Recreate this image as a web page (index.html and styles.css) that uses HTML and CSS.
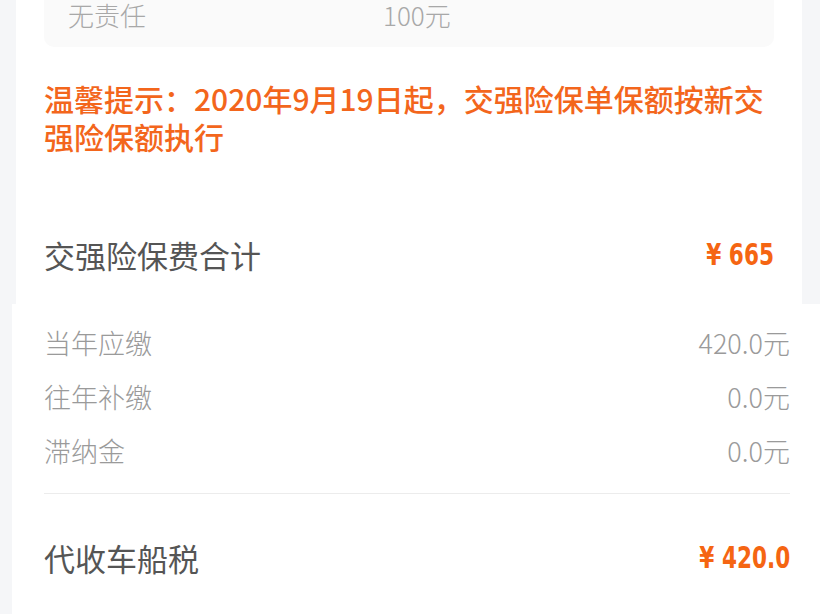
FILE: index.html
```html
<!DOCTYPE html>
<html lang="zh-CN">
<head>
    <meta charset="UTF-8">
    <meta name="viewport" content="width=device-width, initial-scale=1.0">
    <title>交强险保费明细</title>
    <link rel="stylesheet" href="styles.css">
</head>
<body>

    <div class="card card-top">
        <div class="limits">
            <div class="limit-row">
                <span class="limit-name">无责任</span>
                <span class="limit-value">100元</span>
            </div>
        </div>

        <p class="notice">温馨提示：2020年9月19日起，交强险保单保额按新交强险保额执行</p>

        <div class="total-row">
            <span class="total-label">交强险保费合计</span>
            <span class="amount">¥ 665</span>
        </div>
    </div>

    <div class="card card-tax">
        <div class="fee-row">
            <span>当年应缴</span>
            <span>420.0元</span>
        </div>
        <div class="fee-row">
            <span>往年补缴</span>
            <span>0.0元</span>
        </div>
        <div class="fee-row">
            <span>滞纳金</span>
            <span>0.0元</span>
        </div>

        <div class="divider"></div>

        <div class="total-row tax-total">
            <span class="total-label">代收车船税</span>
            <span class="amount">¥ 420.0</span>
        </div>
    </div>

</body>
</html>
```

FILE: styles.css
```css
html, body {
    margin: 0;
    padding: 0;
}
body {
    background-color: #f5f6f8;
    font-family: "Noto Sans CJK SC", "Noto Sans", sans-serif;
    width: 820px;
    overflow: hidden;
}
.card {
    background-color: #fff;
}
.card-top {
    margin-left: 16px;
    width: 786px;
    padding: 0 28px;
    box-sizing: border-box;
}
.limits {
    background-color: #fafafa;
    border-radius: 0 0 10px 10px;
    padding: 0 24px 17px;
}
.limit-row {
    display: flex;
    height: 30px;
    line-height: 30px;
    align-items: center;
    font-size: 26px;
    font-weight: 300;
    color: #a8a8a8;
}
.limit-name {
    width: 315px;
}
.notice {
    margin: 32px 0 0;
    font-size: 30px;
    line-height: 38px;
    font-weight: 500;
    color: #f3661c;
}
.total-row {
    display: flex;
    justify-content: space-between;
    align-items: center;
    height: 94px;
    margin-top: 55px;
    padding-bottom: 5px;
    box-sizing: border-box;
}
.total-label {
    font-size: 31px;
    color: #555;
}
.amount {
    display: inline-block;
    font-family: "DejaVu Sans", sans-serif;
    font-weight: bold;
    font-size: 30px;
    color: #f56512;
    transform: scaleX(0.72);
    transform-origin: right center;
}
.card-tax {
    margin-left: 12px;
    width: 810px;
    padding: 11px 32px 0;
    box-sizing: border-box;
}
.fee-row {
    display: flex;
    justify-content: space-between;
    align-items: center;
    height: 54px;
    font-size: 27px;
    font-weight: 300;
    color: #9a9a9a;
}
.divider {
    margin-top: 16px;
    height: 1px;
    background-color: #ececec;
}
.tax-total {
    margin-top: 0;
    height: 126px;
    padding-bottom: 0;
}
```
